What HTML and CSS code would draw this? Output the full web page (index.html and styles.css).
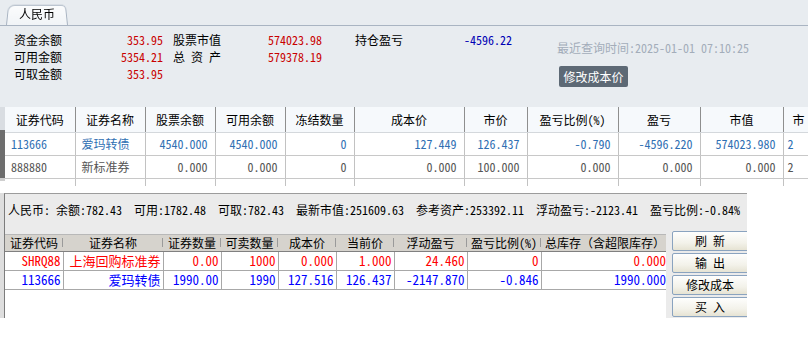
FILE: index.html
```html
<!DOCTYPE html>
<html lang="zh-CN">
<head>
<meta charset="utf-8">
<title>资金持仓</title>
<link rel="stylesheet" href="styles.css">
</head>
<body>
<div class="app">
  <div class="top">
    <div class="tabbar"><div class="tab"><span class="tab-label">人民币</span></div></div>
    <div class="info">
      <div class="icol c1">
        <span>资金余额</span><span class="v red">353.95</span>
        <span>可用金额</span><span class="v red">5354.21</span>
        <span>可取金额</span><span class="v red">353.95</span>
      </div>
      <div class="icol c2">
        <span>股票市值</span><span class="v red">574023.98</span>
        <span>总&ensp;资&ensp;产</span><span class="v red">579378.19</span>
      </div>
      <div class="icol c3">
        <span>持仓盈亏</span><span class="v blue">-4596.22</span>
      </div>
      <div class="c4">
        <div class="qtime">最近查询时间:2025-01-01 07:10:25</div>
        <button class="edit-btn">修改成本价</button>
      </div>
    </div>
  </div>

  <div class="mid">
    <div class="lstrip"></div>
    <div class="grid1">
      <table class="t1">
        <colgroup>
          <col class="w70"><col class="w70"><col class="w70"><col class="w70"><col class="w69">
          <col class="w110"><col class="w63"><col class="w91"><col class="w82"><col class="w83"><col class="w25">
        </colgroup>
        <thead>
          <tr><th>证券代码</th><th>证券名称</th><th>股票余额</th><th>可用余额</th><th>冻结数量</th><th>成本价</th><th>市价</th><th>盈亏比例(%)</th><th>盈亏</th><th>市值</th><th class="lastc">市</th></tr>
        </thead>
        <tbody>
          <tr class="r-blue"><td class="l">113666</td><td class="l">爱玛转债</td><td>4540.000</td><td>4540.000</td><td>0</td><td>127.449</td><td>126.437</td><td>-0.790</td><td>-4596.220</td><td>574023.980</td><td class="l2">2</td></tr>
          <tr class="r-grey"><td class="l">888880</td><td class="l">新标准券</td><td>0.000</td><td>0.000</td><td>0</td><td>0.000</td><td>100.000</td><td>0.000</td><td>0.000</td><td>0.000</td><td class="l2">2</td></tr>
          <tr class="r-empty"><td></td><td></td><td></td><td></td><td></td><td></td><td></td><td></td><td></td><td></td><td></td></tr>
        </tbody>
      </table>
    </div>
  </div>

  <div class="gap"></div>

  <div class="bottom">
    <div class="bstrip"></div>
    <div class="panel">
      <div class="status">人民币: 余额:782.43  可用:1782.48  可取:782.43  最新市值:251609.63  参考资产:253392.11  浮动盈亏:-2123.41  盈亏比例:-0.84%</div>
      <div class="work">
        <div class="grid2">
          <table class="t2">
            <colgroup>
              <col class="b58"><col class="b100"><col class="b58"><col class="b57"><col class="b58">
              <col class="b58"><col class="b73"><col class="b74"><col class="b125">
            </colgroup>
            <thead>
              <tr><th>证券代码</th><th>证券名称</th><th>证券数量</th><th>可卖数量</th><th>成本价</th><th>当前价</th><th>浮动盈亏</th><th>盈亏比例(%)</th><th class="last">总库存（含超限库存）</th></tr>
            </thead>
            <tbody>
              <tr class="red2"><td>SHRQ88</td><td>上海回购标准券</td><td>0.00</td><td>1000</td><td>0.000</td><td>1.000</td><td>24.460</td><td>0</td><td>0.000</td></tr>
              <tr class="blue2"><td>113666</td><td>爱玛转债</td><td>1990.00</td><td>1990</td><td>127.516</td><td>126.437</td><td>-2147.870</td><td>-0.846</td><td>1990.000</td></tr>
            </tbody>
          </table>
        </div>
        <div class="btns">
          <button class="xbtn">刷&ensp;新</button>
          <button class="xbtn">输&ensp;出</button>
          <button class="xbtn">修改成本</button>
          <button class="xbtn">买&ensp;入</button>
        </div>
      </div>
    </div>
  </div>
</div>
</body>
</html>
```

FILE: styles.css
```css
* { box-sizing: border-box; }

body {
  margin: 0;
  width: 808px;
  height: 344px;
  overflow: hidden;
  background: #ffffff;
  font-family: "Noto Sans Mono CJK SC", "Liberation Mono", "Noto Sans CJK SC", monospace;
  font-size: 12px;
  color: #000;
}

.app { width: 808px; }

/* ---------- top summary ---------- */
.top { background: #e8ecf0; height: 107px; }

.tabbar {
  height: 26px;
  border-bottom: 1px solid #a9b4c2;
  display: flex;
  align-items: flex-end;
  padding-left: 6px;
}

.tab {
  position: relative;
  width: 62px;
  height: 22px;
  display: flex;
  align-items: center;
  padding-left: 13px;
}

.tab::before {
  content: "";
  position: absolute;
  inset: 0;
  border: 1px solid #a9b4c2;
  border-bottom: none;
  border-radius: 7px 5px 0 0;
  background: linear-gradient(#fbfcfd, #f1f4f7);
  transform: perspective(50px) rotateX(10deg);
  transform-origin: bottom;
}

.tab-label {
  position: relative;
  font-family: "Noto Sans CJK SC", sans-serif;
  font-size: 12px;
  line-height: 16px;
}

.info {
  display: flex;
  padding: 5px 0 0 14px;
  height: 81px;
}

.icol {
  display: grid;
  grid-template-columns: auto 1fr;
  grid-auto-rows: 17px;
  line-height: 17px;
  align-content: start;
}

.icol .v { text-align: right; }
.c1 { width: 149px; }
.c2 { width: 149px; margin-left: 10px; }
.c3 { width: 157px; margin-left: 33px; }
.c4 { margin-left: 45px; display: flex; flex-direction: column; align-items: flex-start; }

.red { color: #c80000; }
.blue { color: #0000b4; }

.qtime {
  margin-top: 8px;
  line-height: 17px;
  color: #a3adba;
}

.edit-btn {
  margin: 10px 0 0 2px;
  width: 69px;
  height: 21px;
  padding: 0;
  border: none;
  border-radius: 2px;
  background: #5d6975;
  color: #ffffff;
  font-family: "Noto Sans CJK SC", sans-serif;
  font-size: 12px;
  line-height: 21px;
}

/* ---------- upper grid ---------- */
.mid { display: flex; height: 79px; background: #ffffff; }

.lstrip {
  flex: 0 0 5px;
  background: linear-gradient(#d9dde2 0 23px, #6e6e6e 23px 71px, #cfcfcf 71px 74px, #ffffff 74px);
}

.grid1 { flex: 1; overflow: hidden; }

.t1 {
  border-collapse: collapse;
  table-layout: fixed;
  width: 803px;
}

.w70 { width: 70px; } .w69 { width: 69px; } .w110 { width: 110px; } .w63 { width: 63px; }
.w91 { width: 91px; } .w82 { width: 82px; } .w83 { width: 83px; } .w25 { width: 25px; }

.t1 th {
  height: 25px;
  padding: 0;
  font-weight: normal;
  text-align: center;
  background: #f6f9fc;
  border-right: 1px solid #8e8e8e;
  border-bottom: 1px solid #d4d8dc;
  white-space: nowrap;
  overflow: hidden;
}

.t1 th.lastc { text-align: left; padding-left: 9px; border-right: none; }

.t1 td {
  height: 23px;
  padding: 0 7px 0 6px;
  text-align: right;
  white-space: nowrap;
  overflow: hidden;
  border-right: 1px solid #c2c2c2;
  border-bottom: 1px solid #c8c8c8;
  background: #ffffff;
}

.t1 td.l { text-align: left; }
.t1 td.l2 { text-align: left; padding-left: 4px; border-right: none; }
.t1 tr.r-empty td { border-bottom: none; }
.r-blue td { color: #2f6fb3; }
.r-grey td { color: #555555; }

.gap { height: 7px; }

/* ---------- lower panel ---------- */
.bottom { display: flex; height: 125px; }

.bstrip { flex: 0 0 4px; background: #dedede; }

.panel {
  flex: 0 0 743px;
  overflow: hidden;
  background: #ebebeb;
  border-top: 1px solid #9c9c9c;
  border-left: 1px solid #7c7c7c;
}

.status {
  height: 37px;
  padding: 8px 0 0 3px;
  line-height: 16px;
  white-space: pre;
}

.work { display: flex; align-items: flex-start; }

.grid2 {
  flex: 0 0 661px;
  height: 87px;
  margin-top: 3px;
  background: #ffffff;
  overflow: hidden;
  border-top: 1px solid #b8b8b8;
}

.t2 {
  border-collapse: collapse;
  table-layout: fixed;
  width: 661px;
}

.b58 { width: 58px; } .b100 { width: 100px; } .b57 { width: 57px; }
.b73 { width: 73px; } .b74 { width: 74px; } .b125 { width: 125px; }

.t2 th {
  height: 16px;
  padding: 0;
  font-weight: normal;
  font-size: 12px;
  line-height: 15px;
  text-align: center;
  white-space: nowrap;
  overflow: hidden;
  background: #d6d3cd linear-gradient(#9a9a9a, #9a9a9a) right 3px / 1px 9px no-repeat;
  border-bottom: 1px solid #808080;
}

.t2 th.last { background-image: none; text-align: left; padding-left: 4px; }

.t2 td {
  height: 19px;
  padding: 0 2px 0 0;
  font-size: 13px;
  line-height: 18px;
  text-align: right;
  white-space: nowrap;
  overflow: hidden;
  border-right: 1px solid #a8a8a8;
  border-bottom: 1px solid #a8a8a8;
}

.t2 td:last-child { border-right: none; padding-right: 0; }

.red2 td { color: #ff0000; }
.blue2 td { color: #0000ff; }

.btns {
  margin-left: 6px;
  display: flex;
  flex-direction: column;
  gap: 2px;
}

.xbtn {
  width: 80px;
  height: 20px;
  padding: 0 4px 0 0;
  border: 1px solid #8aa3bf;
  border-radius: 2px;
  background: linear-gradient(#fefefd, #f3f2ea 60%, #e6e3d3);
  font-family: "Noto Sans Mono CJK SC", "Noto Sans CJK SC", sans-serif;
  font-size: 12px;
  line-height: 18px;
  color: #000;
  text-align: center;
}
```
